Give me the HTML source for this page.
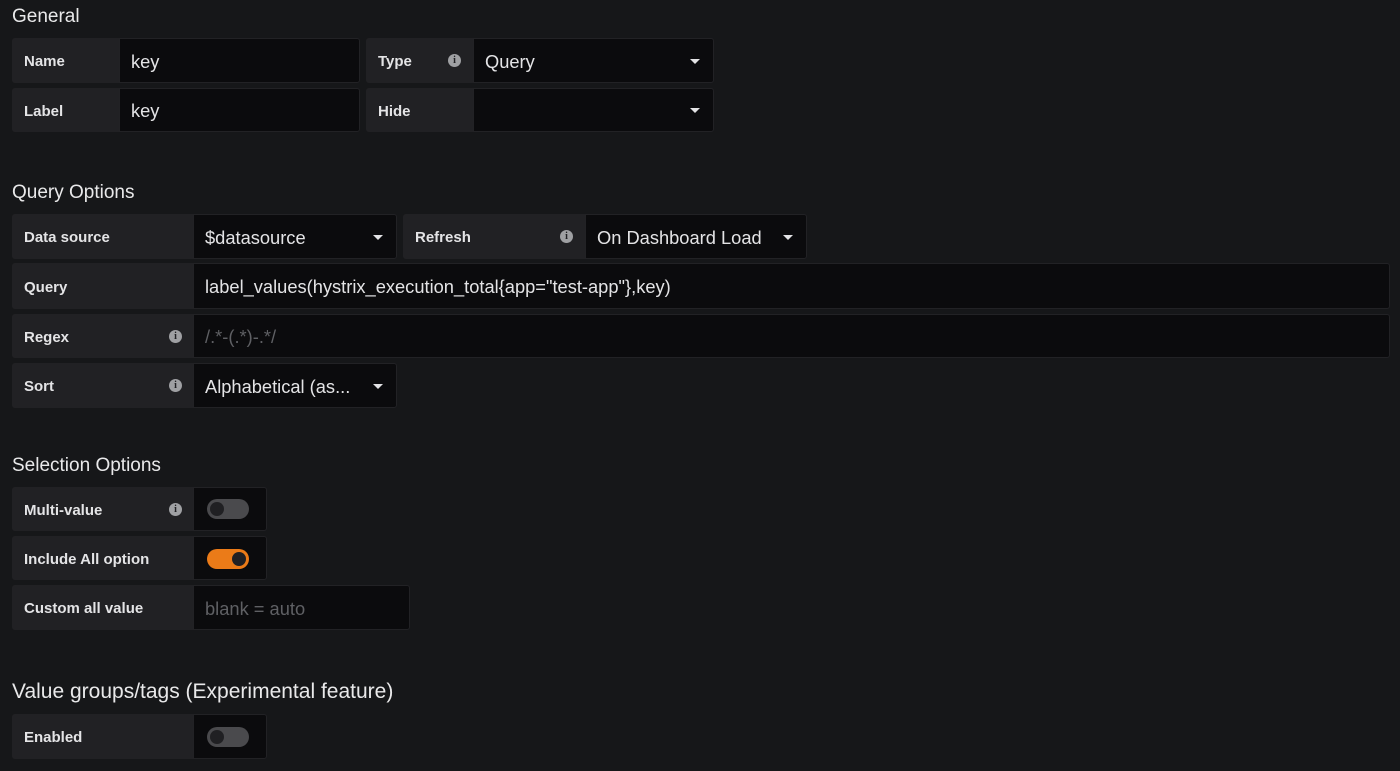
<!DOCTYPE html>
<html><head><style>
body{margin:0;width:1400px;height:771px;background:#161719;font-family:"Liberation Sans",sans-serif;color:#d8d9da;position:relative;overflow:hidden}
.h{position:absolute;left:12px;font-size:19px;color:#e9e9ea}
.l,.i{position:absolute;box-sizing:border-box;display:flex;align-items:center;padding-top:2px}
.l{background:#212124;border-radius:3px 0 0 3px;padding-left:12px;font-weight:bold;font-size:15px;color:#e4e4e6}
.i{background:#0b0b0d;border:1px solid #222225;border-radius:0 3px 3px 0;padding-left:11px;font-size:18.3px;color:#e4e4e6}
.ph{color:#5f6064}
.info{position:absolute;width:13px;height:13px;border-radius:50%;background:#9fa0a3;color:#212124;font-size:10px;font-weight:bold;text-align:center;line-height:13px;font-family:"Liberation Serif",serif}
.car{position:absolute;width:0;height:0;border-left:5px solid transparent;border-right:5px solid transparent;border-top:5px solid #e4e4e6}
.tg{position:absolute;width:42px;height:20px;border-radius:10px;background:#4a4a4d}
.tg::after{content:"";position:absolute;left:3px;top:3px;width:14px;height:14px;border-radius:50%;background:#202023}
.tg.on{background:#eb7b18}
.tg.on::after{left:25px}
</style></head><body>
<div class="h" style="top:6px">General</div>
<div class="l" style="left:12px;top:38px;width:107px;height:45px">Name</div>
<div class="i" style="left:119px;top:38px;width:241px;height:45px">key</div>
<div class="l" style="left:366px;top:38px;width:107px;height:45px">Type</div><div class="info" style="left:448px;top:54px">i</div>
<div class="i" style="left:473px;top:38px;width:241px;height:45px">Query</div><div class="car" style="left:690px;top:59px"></div>
<div class="l" style="left:12px;top:88px;width:107px;height:44px">Label</div>
<div class="i" style="left:119px;top:88px;width:241px;height:44px">key</div>
<div class="l" style="left:366px;top:88px;width:107px;height:44px">Hide</div>
<div class="i" style="left:473px;top:88px;width:241px;height:44px"></div><div class="car" style="left:690px;top:108px"></div>

<div class="h" style="top:182px">Query Options</div>
<div class="l" style="left:12px;top:214px;width:181px;height:45px">Data source</div>
<div class="i" style="left:193px;top:214px;width:204px;height:45px">$datasource</div><div class="car" style="left:373px;top:235px"></div>
<div class="l" style="left:403px;top:214px;width:182px;height:45px">Refresh</div><div class="info" style="left:560px;top:230px">i</div>
<div class="i" style="left:585px;top:214px;width:222px;height:45px">On Dashboard Load</div><div class="car" style="left:783px;top:235px"></div>
<div class="l" style="left:12px;top:263px;width:181px;height:46px">Query</div>
<div class="i" style="left:193px;top:263px;width:1197px;height:46px">label_values(hystrix_execution_total{app="test-app"},key)</div>
<div class="l" style="left:12px;top:314px;width:181px;height:44px">Regex</div><div class="info" style="left:169px;top:330px">i</div>
<div class="i" style="left:193px;top:314px;width:1197px;height:44px"><span class="ph">/.*-(.*)-.*/</span></div>
<div class="l" style="left:12px;top:363px;width:181px;height:45px">Sort</div><div class="info" style="left:169px;top:379px">i</div>
<div class="i" style="left:193px;top:363px;width:204px;height:45px">Alphabetical (as...</div><div class="car" style="left:373px;top:384px"></div>

<div class="h" style="top:455px">Selection Options</div>
<div class="l" style="left:12px;top:487px;width:181px;height:44px">Multi-value</div><div class="info" style="left:169px;top:503px">i</div>
<div class="i" style="left:193px;top:487px;width:74px;height:44px"></div><div class="tg" style="left:207px;top:499px"></div>
<div class="l" style="left:12px;top:536px;width:181px;height:44px">Include All option</div>
<div class="i" style="left:193px;top:536px;width:74px;height:44px"></div><div class="tg on" style="left:207px;top:549px"></div>
<div class="l" style="left:12px;top:585px;width:181px;height:45px">Custom all value</div>
<div class="i" style="left:193px;top:585px;width:217px;height:45px"><span class="ph">blank = auto</span></div>

<div class="h" style="top:680px;font-size:21px">Value groups/tags (Experimental feature)</div>
<div class="l" style="left:12px;top:714px;width:181px;height:45px">Enabled</div>
<div class="i" style="left:193px;top:714px;width:74px;height:45px"></div><div class="tg" style="left:207px;top:727px"></div>
</body></html>
